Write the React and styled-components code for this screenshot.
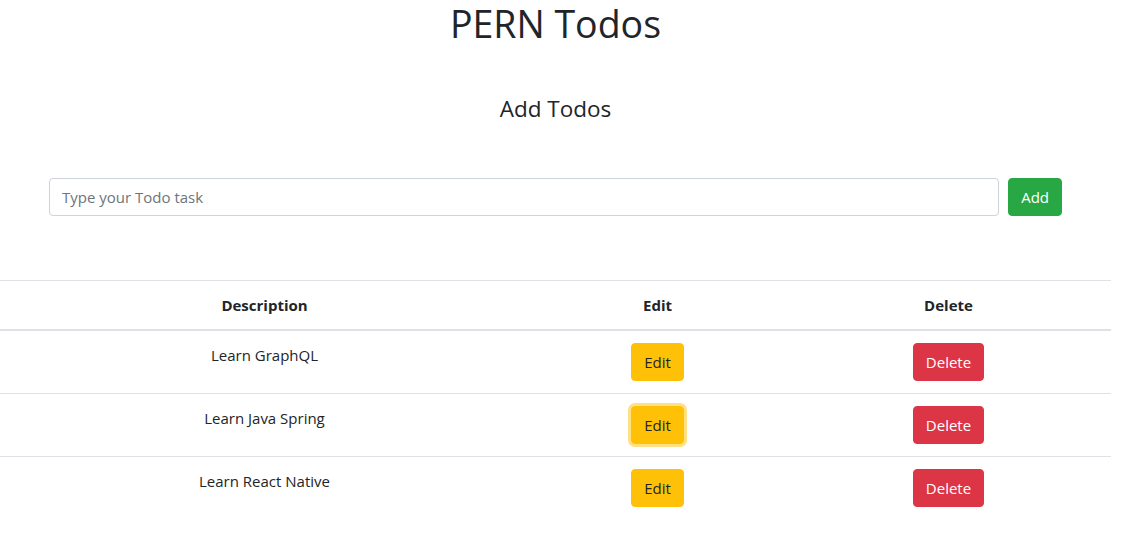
import React from "react";
import styled, { createGlobalStyle, css } from "styled-components";

const GlobalStyle = createGlobalStyle`
  * { box-sizing: border-box; }
  body {
    margin: 0;
    background: #fff;
    color: #212529;
    font-family: "Open Sans", "Noto Sans", sans-serif;
    font-size: 15px;
    line-height: 24px;
  }
`;

const Page = styled.div`
  width: 1111px;
`;

const Title = styled.h1`
  margin: 0;
  text-align: center;
  font-size: 37.5px;
  font-weight: 400;
  line-height: 48px;
`;

const SubTitle = styled.h4`
  margin: 46px 0 0;
  text-align: center;
  font-size: 22.5px;
  font-weight: 400;
  line-height: 29px;
`;

const Form = styled.form`
  display: flex;
  gap: 9px;
  margin: 55px 49px 0;
`;

const Input = styled.input`
  flex: 1;
  height: 38px;
  padding: 6px 12px;
  font: inherit;
  font-size: 15px;
  color: #495057;
  border: 1px solid #ced4da;
  border-radius: 4px;
  outline: none;
  &::placeholder { color: #6c757d; }
`;

const variants = {
  success: css`background: #28a745; border-color: #28a745; color: #fff;`,
  warning: css`background: #ffc107; border-color: #ffc107; color: #212529;`,
  danger: css`background: #dc3545; border-color: #dc3545; color: #fff;`,
};

const Button = styled.button`
  display: inline-block;
  height: 38px;
  padding: 6px 12px;
  font: inherit;
  font-size: 15px;
  line-height: 24px;
  border: 1px solid transparent;
  border-radius: 4px;
  cursor: pointer;
  ${(p) => variants[p.$variant]}
  ${(p) =>
    p.$focused &&
    css`box-shadow: 0 0 0 3px rgba(255, 193, 7, 0.5);`}
`;

const Table = styled.table`
  width: 1111px;
  margin-top: 64px;
  border-collapse: collapse;
  table-layout: fixed;
  text-align: center;
`;

const Th = styled.th`
  padding: 12px;
  font-weight: 700;
  border-top: 1px solid #dee2e6;
  border-bottom: 2px solid #dee2e6;
  vertical-align: bottom;
  width: ${(p) => p.$w}px;
`;

const Td = styled.td`
  padding: 12px;
  border-top: 1px solid #dee2e6;
  vertical-align: top;
`;

const todos = [
  { id: 1, description: "Learn GraphQL" },
  { id: 2, description: "Learn Java Spring", focused: true },
  { id: 3, description: "Learn React Native" },
];

export default function App() {
  return (
    <>
      <GlobalStyle />
      <Page>
        <Title>PERN Todos</Title>
        <SubTitle>Add Todos</SubTitle>
        <Form onSubmit={(e) => e.preventDefault()}>
          <Input placeholder="Type your Todo task" />
          <Button $variant="success">Add</Button>
        </Form>
        <Table>
          <thead>
            <tr>
              <Th $w={529}>Description</Th>
              <Th $w={257}>Edit</Th>
              <Th $w={325}>Delete</Th>
            </tr>
          </thead>
          <tbody>
            {todos.map((t) => (
              <tr key={t.id}>
                <Td>{t.description}</Td>
                <Td>
                  <Button $variant="warning" $focused={t.focused}>Edit</Button>
                </Td>
                <Td>
                  <Button $variant="danger">Delete</Button>
                </Td>
              </tr>
            ))}
          </tbody>
        </Table>
      </Page>
    </>
  );
}
